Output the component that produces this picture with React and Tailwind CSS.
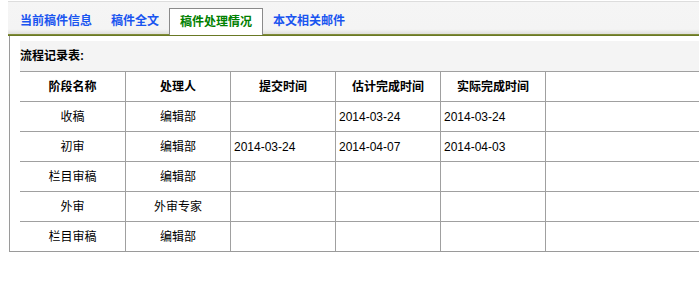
import React from 'react';

const font = { fontFamily: '"Liberation Sans", "Noto Sans CJK SC", sans-serif' };

const rows = [
  ['收稿', '编辑部', '', '2014-03-24', '2014-03-24'],
  ['初审', '编辑部', '2014-03-24', '2014-04-07', '2014-04-03'],
  ['栏目审稿', '编辑部', '', '', ''],
  ['外审', '外审专家', '', '', ''],
  ['栏目审稿', '编辑部', '', '', ''],
];

const headers = ['阶段名称', '处理人', '提交时间', '估计完成时间', '实际完成时间', ''];

// grid columns: vertical lines at 125 / 230 / 335 / 440 / 545
const cols = 'grid grid-cols-[106px_105px_105px_105px_105px_1fr]';

export default function App() {
  return (
    <div className="w-[699px] h-[283px] overflow-hidden bg-white text-[12px] text-black" style={font}>
      {/* Tabs */}
      <div className="ml-[8px] mt-px border-t border-[#dddddd] bg-gradient-to-b from-[#f5f5f5] via-[#f4f4f4] via-80% to-[#d6d6d2]">
        <div className="flex items-end h-[32px] pl-[12px] font-bold">
          <span className="mb-[5px] mr-[19px] text-[#1a55f0] leading-[16px]">当前稿件信息</span>
          <span className="mb-[5px] mr-[10px] text-[#1a55f0] leading-[16px]">稿件全文</span>
          <span className="h-[27px] -mb-px relative z-10 border border-b-0 border-[#8a8a8a] bg-white px-[10px] flex items-center text-[#008000] mr-[10px]">
            稿件处理情况
          </span>
          <span className="mb-[5px] text-[#1a55f0] leading-[16px]">本文相关邮件</span>
        </div>
        <div className="h-[2px] bg-gradient-to-b from-[#8a9440] to-[#5f701a]" />
      </div>

      {/* Content */}
      <div className="ml-[9px] border-l border-b border-[#9a9a9a] pl-[10px] pt-[5px]">
        <div className="h-[30px] bg-[#f4f4f4] flex items-center font-bold">流程记录表:</div>
        <div className="w-[760px] border-t border-[#a0a0a0]">
          <div className={`${cols} h-[30px] border-b border-[#a0a0a0] font-bold`}>
            {headers.map((h, i) => (
              <div key={i} className="border-r border-[#a0a0a0] flex items-center justify-center">
                {h}
              </div>
            ))}
          </div>
          {rows.map((r, ri) => (
            <div
              key={ri}
              className={`${cols} ${ri < rows.length - 1 ? 'h-[30px] border-b border-[#a0a0a0]' : 'h-[29px]'}`}
            >
              <div className="border-r border-[#a0a0a0] flex items-center justify-center">{r[0]}</div>
              <div className="border-r border-[#a0a0a0] flex items-center justify-center">{r[1]}</div>
              <div className="border-r border-[#a0a0a0] flex items-center pl-[3px]">{r[2]}</div>
              <div className="border-r border-[#a0a0a0] flex items-center pl-[3px]">{r[3]}</div>
              <div className="border-r border-[#a0a0a0] flex items-center pl-[3px]">{r[4]}</div>
              <div className="border-r border-[#a0a0a0]" />
            </div>
          ))}
        </div>
      </div>
    </div>
  );
}
